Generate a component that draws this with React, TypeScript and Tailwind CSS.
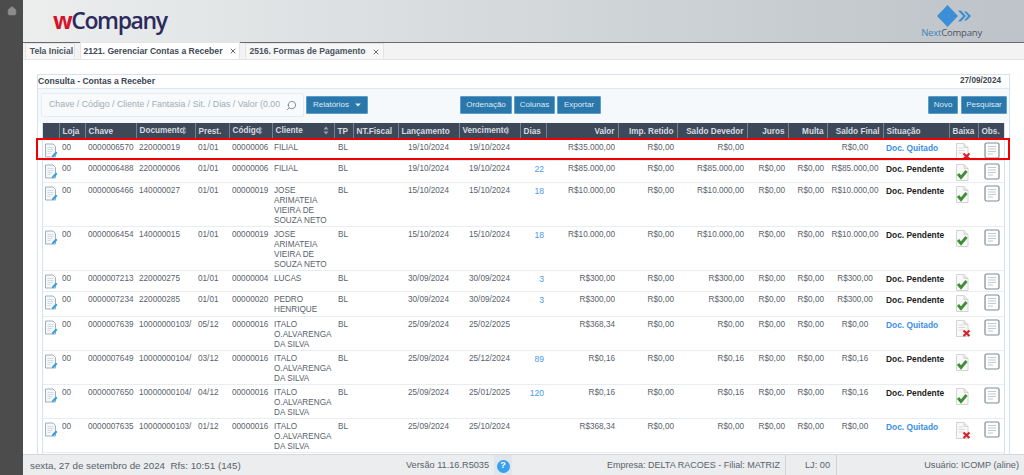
import React from 'react';
import { Home, Search, X } from 'lucide-react';

type Row = {
  h: string;
  chave: string;
  doc: string;
  prest: string;
  cod: string;
  cliente: string;
  lanc: string;
  venc: string;
  dias: string;
  valor: string;
  imp: string;
  saldo: string;
  juros: string;
  multa: string;
  final: string;
  quitado: boolean;
};

const rows: Row[] = [
  { h: 'h-[20px]', chave: '0000006570', doc: '220000019', prest: '01/01', cod: '00000006', cliente: 'FILIAL', lanc: '19/10/2024', venc: '19/10/2024', dias: '', valor: 'R$35.000,00', imp: 'R$0,00', saldo: 'R$0,00', juros: '', multa: '', final: 'R$0,00', quitado: true },
  { h: 'h-[22px]', chave: '0000006488', doc: '220000006', prest: '01/01', cod: '00000006', cliente: 'FILIAL', lanc: '19/10/2024', venc: '19/10/2024', dias: '22', valor: 'R$85.000,00', imp: 'R$0,00', saldo: 'R$85.000,00', juros: 'R$0,00', multa: 'R$0,00', final: 'R$85.000,00', quitado: false },
  { h: 'h-[44px]', chave: '0000006466', doc: '140000027', prest: '01/01', cod: '00000019', cliente: 'JOSE ARIMATEIA VIEIRA DE SOUZA NETO', lanc: '15/10/2024', venc: '15/10/2024', dias: '18', valor: 'R$10.000,00', imp: 'R$0,00', saldo: 'R$10.000,00', juros: 'R$0,00', multa: 'R$0,00', final: 'R$10.000,00', quitado: false },
  { h: 'h-[44px]', chave: '0000006454', doc: '140000015', prest: '01/01', cod: '00000019', cliente: 'JOSE ARIMATEIA VIEIRA DE SOUZA NETO', lanc: '15/10/2024', venc: '15/10/2024', dias: '18', valor: 'R$10.000,00', imp: 'R$0,00', saldo: 'R$10.000,00', juros: 'R$0,00', multa: 'R$0,00', final: 'R$10.000,00', quitado: false },
  { h: 'h-[21px]', chave: '0000007213', doc: '220000275', prest: '01/01', cod: '00000004', cliente: 'LUCAS', lanc: '30/09/2024', venc: '30/09/2024', dias: '3', valor: 'R$300,00', imp: 'R$0,00', saldo: 'R$300,00', juros: 'R$0,00', multa: 'R$0,00', final: 'R$300,00', quitado: false },
  { h: 'h-[25px]', chave: '0000007234', doc: '220000285', prest: '01/01', cod: '00000020', cliente: 'PEDRO HENRIQUE', lanc: '30/09/2024', venc: '30/09/2024', dias: '3', valor: 'R$300,00', imp: 'R$0,00', saldo: 'R$300,00', juros: 'R$0,00', multa: 'R$0,00', final: 'R$300,00', quitado: false },
  { h: 'h-[34px]', chave: '0000007639', doc: '10000000103/', prest: '05/12', cod: '00000016', cliente: 'ITALO O.ALVARENGA DA SILVA', lanc: '25/09/2024', venc: '25/02/2025', dias: '', valor: 'R$368,34', imp: 'R$0,00', saldo: 'R$0,00', juros: 'R$0,00', multa: 'R$0,00', final: 'R$0,00', quitado: true },
  { h: 'h-[34px]', chave: '0000007649', doc: '10000000104/', prest: '03/12', cod: '00000016', cliente: 'ITALO O.ALVARENGA DA SILVA', lanc: '25/09/2024', venc: '25/12/2024', dias: '89', valor: 'R$0,16', imp: 'R$0,00', saldo: 'R$0,16', juros: 'R$0,00', multa: 'R$0,00', final: 'R$0,16', quitado: false },
  { h: 'h-[34px]', chave: '0000007650', doc: '10000000104/', prest: '04/12', cod: '00000016', cliente: 'ITALO O.ALVARENGA DA SILVA', lanc: '25/09/2024', venc: '25/01/2025', dias: '120', valor: 'R$0,16', imp: 'R$0,00', saldo: 'R$0,16', juros: 'R$0,00', multa: 'R$0,00', final: 'R$0,16', quitado: false },
  { h: 'h-[34px]', chave: '0000007635', doc: '10000000103/', prest: '01/12', cod: '00000016', cliente: 'ITALO O.ALVARENGA DA SILVA', lanc: '25/09/2024', venc: '25/10/2024', dias: '', valor: 'R$368,34', imp: 'R$0,00', saldo: 'R$0,00', juros: 'R$0,00', multa: 'R$0,00', final: 'R$0,00', quitado: true },
];

function SortIcon({ className }: { className?: string }) {
  return (
    <svg width="6" height="9" viewBox="0 0 6 9" className={`shrink-0 ${className ?? ''}`}>
      <path d="M3 0.5L5.5 3.5H0.5Z M3 8.5L0.5 5.5H5.5Z" fill="#9aa3ad" />
    </svg>
  );
}

function EditIcon() {
  return (
    <svg width="13" height="15" viewBox="0 0 13 15" className="block">
      <path d="M0.5 1H8L10.5 3.5V14H0.5Z" fill="#f6f8fa" stroke="#9fb0bd" strokeWidth="1" />
      <path d="M2.5 4.5H8.5M2.5 6.5H8.5M2.5 8.5H7.5M2.5 10.5H5.5" stroke="#cdd7de" strokeWidth="0.9" />
      <path d="M7 12.5L11 8.5L12.5 10L8.5 14L7 14Z" fill="#2f9fe0" />
    </svg>
  );
}

function BaixaIcon({ quitado }: { quitado: boolean }) {
  return (
    <svg width="16" height="17" viewBox="0 0 16 17" className="block">
      <path d="M1.5 0.5H9L13 4.5V16.5H1.5Z" fill="#f9f9f9" stroke="#d4d4d4" strokeWidth="1" />
      <path d="M9 0.5V4.5H13" fill="#e6e6e6" stroke="#d4d4d4" strokeWidth="1" />
      {quitado ? (
        <>
          <path d="M3.5 5H8M3.5 7.5H10M3.5 10H8" stroke="#dadada" strokeWidth="1" />
          <path d="M8.5 10.5L14.5 16M14.5 10.5L8.5 16" stroke="#d5222a" strokeWidth="2.2" />
        </>
      ) : (
        <path d="M3 10L6 13.5L11.5 7" fill="none" stroke="#3f8f36" strokeWidth="2.8" />
      )}
    </svg>
  );
}

function ObsIcon() {
  return (
    <svg width="16" height="17" viewBox="0 0 16 17" className="block">
      <rect x="1" y="1" width="14" height="15" rx="1.5" fill="#fdfdfd" stroke="#7f8d96" strokeWidth="1.2" />
      <path d="M4 4.5H12M4 7H12M4 9.5H12M4 12H9" stroke="#c4cad0" strokeWidth="1" />
    </svg>
  );
}

function ToolButton({ w, children }: { w: string; children: React.ReactNode }) {
  return (
    <button className={`${w} h-[18px] bg-[#2a77ab] border border-[#5d9dc9] rounded-[1px] text-[8px] leading-none text-[#dfeaf2]`}>
      {children}
    </button>
  );
}

function Th({ children, right, sort }: { children?: React.ReactNode; right?: boolean; sort?: 'end' | 'over' }) {
  return (
    <th className={`border-r border-[#76818e] px-[3px] font-bold whitespace-nowrap overflow-hidden ${right ? 'text-right' : 'text-left'}`}>
      {sort ? (
        <span className={`flex items-center -mt-[2px] ${sort === 'end' ? 'justify-between pr-[2px]' : ''}`}>
          {children}
          <SortIcon className={sort === 'over' ? '-ml-[4px]' : ''} />
        </span>
      ) : (
        children
      )}
    </th>
  );
}

export default function App() {
  return (
    <div className="flex h-[475px] w-[1024px] overflow-hidden bg-white font-[Liberation_Sans,Arial,sans-serif]">
      <aside className="w-[23px] shrink-0 bg-[#4c4c4c] flex justify-center pt-[6px]">
        <Home size={10} fill="#8c8c8c" stroke="#8c8c8c" />
      </aside>

      <div className="flex-1 min-w-0 flex flex-col">
        <header className="h-[43px] shrink-0 flex items-center justify-between bg-gradient-to-r from-[#eceeee] to-[#bdc3c8] border-b border-[#666b70] pl-[30px] pr-[42px]">
          <div className="text-[23px] leading-none font-semibold tracking-[-1.4px] font-[Open_Sans,sans-serif] text-[#2c2a5c] -mt-[1px]">
            <span className="text-[#d3152c] font-bold">w</span>Company
          </div>
          <div className="flex flex-col items-center">
            <svg width="36" height="22" viewBox="0 0 36 22" className="ml-[6px]">
              <path d="M10.5 0L21 11L10.5 22L0 11Z" fill="#3b8fd6" />
              <path d="M21 5.5H24L29 11L24 16.5H21L26 11Z" fill="#3b8fd6" />
              <path d="M27 6.5H29.5L34 11L29.5 15.5H27L31 11Z" fill="#3b8fd6" />
            </svg>
            <div className="text-[9.5px] leading-[11px] font-[Open_Sans,sans-serif] tracking-[-0.2px] text-[#4d5560]">
              <span className="text-[#3d86bd]">Next</span>Company
            </div>
          </div>
        </header>

        <nav className="h-[17px] shrink-0 flex items-end gap-[5px] bg-[#f3f3f3] border-b border-[#e6e6e6] pl-[2px] text-[8.6px] font-bold text-[#4a5560]">
          <div className="h-[16px] w-[50px] flex items-center justify-center pl-[3px] bg-[#f7f7f7] border-x border-t border-[#e4e4e4]">Tela Inicial</div>
          <div className="h-[17px] w-[160px] flex items-center justify-center gap-[6px] bg-white border-x border-t border-[#e4e4e4] text-[#3f4a55]">
            2121. Gerenciar Contas a Receber <X size={8} strokeWidth={2.5} />
          </div>
          <div className="h-[16px] w-[139px] flex items-center justify-center gap-[6px] bg-[#f7f7f7] border-x border-t border-[#e4e4e4]">
            2516. Formas de Pagamento <X size={8} strokeWidth={2.5} />
          </div>
        </nav>

        <main className="flex-1 min-h-0 pl-[14px] pr-[14px] pt-[14px] overflow-hidden">
          <section className="relative h-full border-x border-t border-[#d5e2ee]">
            <div className="h-[14px] flex items-center justify-between border-b border-[#dde7f0] pr-[8px] text-[8.6px] font-bold text-[#3c4650]">
              <span>Consulta - Contas a Receber</span>
              <span className="text-[8.2px]">27/09/2024</span>
            </div>

            <div className="h-[34px] flex items-center bg-[#f6f9fb] pl-[3px] pr-[3px] pb-[2px]">
              <div className="h-[24px] w-[263px] flex items-center justify-between bg-[#f8fafb] border border-[#e6ecf1] rounded-[2px] pl-[7px] pr-[6px] text-[8.8px] text-[#a3adb6] whitespace-nowrap">
                <span>Chave / Código / Cliente / Fantasia / Sit. / Dias / Valor (0.00</span>
                <Search size={11} className="shrink-0 text-[#7d8790] -scale-x-100" />
              </div>
              <button className="ml-[2px] h-[18px] w-[62px] flex items-center justify-center gap-[6px] bg-[#2a77ab] border border-[#5d9dc9] rounded-[1px] text-[8px] text-[#dfeaf2]">
                Relatórios
                <svg width="6" height="4" viewBox="0 0 6 4">
                  <path d="M0 0.5H6L3 3.5Z" fill="#dfeaf2" />
                </svg>
              </button>
              <div className="ml-[92px] flex gap-[2px]">
                <ToolButton w="w-[52px]">Ordenação</ToolButton>
                <ToolButton w="w-[41px]">Colunas</ToolButton>
                <ToolButton w="w-[44px]">Exportar</ToolButton>
              </div>
              <div className="ml-auto flex gap-[3px] -mr-[1px]">
                <ToolButton w="w-[30px]">Novo</ToolButton>
                <ToolButton w="w-[46px]">Pesquisar</ToolButton>
              </div>
            </div>

            <div className="ml-[4px] mr-[4px] border-x border-[#d5e2ee] h-[331px] overflow-hidden bg-white">
              <table className="table-fixed w-[963px] border-collapse text-[8.2px] leading-[10px] text-[#59626b]">
                <colgroup>
                  <col className="w-[16px]" />
                  <col className="w-[26px]" />
                  <col className="w-[51px]" />
                  <col className="w-[59px]" />
                  <col className="w-[34px]" />
                  <col className="w-[43px]" />
                  <col className="w-[62px]" />
                  <col className="w-[19px]" />
                  <col className="w-[45px]" />
                  <col className="w-[61px]" />
                  <col className="w-[61px]" />
                  <col className="w-[26px]" />
                  <col className="w-[72px]" />
                  <col className="w-[59px]" />
                  <col className="w-[70px]" />
                  <col className="w-[41px]" />
                  <col className="w-[39px]" />
                  <col className="w-[56px]" />
                  <col className="w-[66px]" />
                  <col className="w-[29px]" />
                  <col className="w-[28px]" />
                </colgroup>
                <thead>
                  <tr className="h-[17px] bg-[#3d4959] text-[#d5dbe1] text-[8.2px]">
                    <Th />
                    <Th>Loja</Th>
                    <Th>Chave</Th>
                    <Th sort="over">Documento</Th>
                    <Th>Prest.</Th>
                    <Th sort="over">Código</Th>
                    <Th sort="end">Cliente</Th>
                    <Th>TP</Th>
                    <Th>NT.Fiscal</Th>
                    <Th>Lançamento</Th>
                    <Th sort="over">Vencimento</Th>
                    <Th>Dias</Th>
                    <Th right>Valor</Th>
                    <Th right>Imp. Retido</Th>
                    <Th right>Saldo Devedor</Th>
                    <Th right>Juros</Th>
                    <Th right>Multa</Th>
                    <Th right>Saldo Final</Th>
                    <Th>Situação</Th>
                    <Th>Baixa</Th>
                    <Th>Obs.</Th>
                  </tr>
                </thead>
                <tbody>
                  {rows.map((r) => (
                    <tr key={r.chave} className={`${r.h} border-b border-[#e9edf1] align-top`}>
                      <td className="pl-[2px] pt-[3px]"><EditIcon /></td>
                      <td className="px-[3px] pt-[3px]">00</td>
                      <td className="px-[3px] pt-[3px]">{r.chave}</td>
                      <td className="px-[3px] pt-[3px] overflow-hidden whitespace-nowrap">{r.doc}</td>
                      <td className="px-[3px] pt-[3px]">{r.prest}</td>
                      <td className="px-[3px] pt-[3px]">{r.cod}</td>
                      <td className="px-[2px] pt-[3px]">{r.cliente}</td>
                      <td className="px-[4px] pt-[3px]">BL</td>
                      <td />
                      <td className="pt-[3px] text-center">{r.lanc}</td>
                      <td className="pt-[3px] text-center">{r.venc}</td>
                      <td className="pr-[2px] pt-[3px] text-right text-[#4a9be8] text-[8.6px]">{r.dias}</td>
                      <td className="pr-[3px] pt-[3px] text-right">{r.valor}</td>
                      <td className="pr-[3px] pt-[3px] text-right">{r.imp}</td>
                      <td className="pr-[3px] pt-[3px] text-right">{r.saldo}</td>
                      <td className="pr-[3px] pt-[3px] text-right">{r.juros}</td>
                      <td className="pr-[3px] pt-[3px] text-right">{r.multa}</td>
                      <td className="pt-[3px] text-center whitespace-nowrap">{r.final}</td>
                      <td className={`pl-[3px] pt-[3px] font-bold whitespace-nowrap text-[8.4px] ${r.quitado ? 'text-[#3b8fe8]' : 'text-[#1c1c1c]'}`}>
                        {r.quitado ? 'Doc. Quitado' : 'Doc. Pendente'}
                      </td>
                      <td className="pl-[6px] pt-[3px]"><BaixaIcon quitado={r.quitado} /></td>
                      <td className="pl-[6px] pt-[2px]"><ObsIcon /></td>
                    </tr>
                  ))}
                </tbody>
              </table>
            </div>

            <div className="absolute left-[-2px] top-[63px] w-[974px] h-[22px] border-2 border-[#f00000]" />
          </section>
        </main>

        <footer className="h-[21px] shrink-0 flex items-center bg-[#ebedee] border-t border-[#d3d8db] pl-[7px] text-[#59626b] whitespace-nowrap">
          <span className="w-[376px] text-[9.8px] pt-[2px]">sexta, 27 de setembro de 2024 &nbsp;Rfs: 10:51 (145)</span>
          <span className="w-[88px] text-[9.2px] pt-[2px]">Versão 11.16.R5035</span>
          <span className="w-[18px] h-full flex items-center justify-center bg-[#dfe6ec] pt-[2px]">
            <span className="w-[13px] h-[13px] rounded-full bg-[#39a0ec] text-white text-[9px] font-bold flex items-center justify-center">?</span>
          </span>
          <span className="ml-auto h-full flex items-center pr-[5px] pt-[2px] border-r border-[#cfd4d8] text-[9px]">Empresa: DELTA RACOES - Filial: MATRIZ</span>
          <span className="h-full w-[51px] flex items-center justify-end pr-[6px] pt-[2px] border-r border-[#cfd4d8] text-[9.2px]">LJ: 00</span>
          <span className="w-[187px] text-right pr-[5px] pt-[2px] text-[9.2px]">Usuário: ICOMP (aline)</span>
        </footer>
      </div>
    </div>
  );
}
